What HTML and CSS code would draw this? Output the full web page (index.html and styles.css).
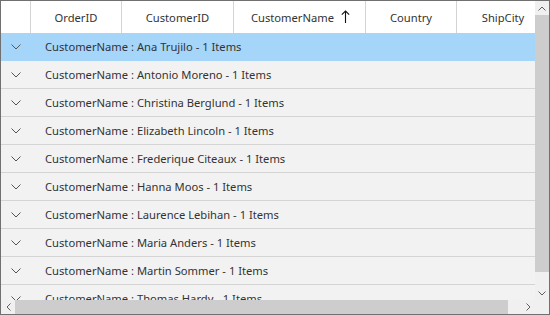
FILE: index.html
```html
<!DOCTYPE html>
<html>
<head>
<meta charset="utf-8">
<link rel="stylesheet" href="styles.css">
</head>
<body>
<div class="grid">
  <div class="viewport">
    <div class="header">
      <div class="hcell indent"></div>
      <div class="hcell c-order">OrderID</div>
      <div class="hcell c-cid">CustomerID</div>
      <div class="hcell c-name">CustomerName <svg class="sort" width="9" height="14" viewBox="0 0 9 14"><path d="M4.5 1 V13 M0.8 4.7 L4.5 1 L8.2 4.7" fill="none" stroke="#111" stroke-width="1.1"/></svg></div>
      <div class="hcell c-country">Country</div>
      <div class="hcell c-city">ShipCity</div>
    </div>
    <div class="rows">
      <div class="row selected"><span class="exp"><svg width="10" height="6" viewBox="0 0 10 6"><path d="M0.5 0.5 L5 5 L9.5 0.5" fill="none" stroke="#555" stroke-width="1"/></svg></span><span class="cap">CustomerName : Ana Trujilo - 1 Items</span></div>
      <div class="row"><span class="exp"><svg width="10" height="6" viewBox="0 0 10 6"><path d="M0.5 0.5 L5 5 L9.5 0.5" fill="none" stroke="#555" stroke-width="1"/></svg></span><span class="cap">CustomerName : Antonio Moreno - 1 Items</span></div>
      <div class="row"><span class="exp"><svg width="10" height="6" viewBox="0 0 10 6"><path d="M0.5 0.5 L5 5 L9.5 0.5" fill="none" stroke="#555" stroke-width="1"/></svg></span><span class="cap">CustomerName : Christina Berglund - 1 Items</span></div>
      <div class="row"><span class="exp"><svg width="10" height="6" viewBox="0 0 10 6"><path d="M0.5 0.5 L5 5 L9.5 0.5" fill="none" stroke="#555" stroke-width="1"/></svg></span><span class="cap">CustomerName : Elizabeth Lincoln - 1 Items</span></div>
      <div class="row"><span class="exp"><svg width="10" height="6" viewBox="0 0 10 6"><path d="M0.5 0.5 L5 5 L9.5 0.5" fill="none" stroke="#555" stroke-width="1"/></svg></span><span class="cap">CustomerName : Frederique Citeaux - 1 Items</span></div>
      <div class="row"><span class="exp"><svg width="10" height="6" viewBox="0 0 10 6"><path d="M0.5 0.5 L5 5 L9.5 0.5" fill="none" stroke="#555" stroke-width="1"/></svg></span><span class="cap">CustomerName : Hanna Moos - 1 Items</span></div>
      <div class="row"><span class="exp"><svg width="10" height="6" viewBox="0 0 10 6"><path d="M0.5 0.5 L5 5 L9.5 0.5" fill="none" stroke="#555" stroke-width="1"/></svg></span><span class="cap">CustomerName : Laurence Lebihan - 1 Items</span></div>
      <div class="row"><span class="exp"><svg width="10" height="6" viewBox="0 0 10 6"><path d="M0.5 0.5 L5 5 L9.5 0.5" fill="none" stroke="#555" stroke-width="1"/></svg></span><span class="cap">CustomerName : Maria Anders - 1 Items</span></div>
      <div class="row"><span class="exp"><svg width="10" height="6" viewBox="0 0 10 6"><path d="M0.5 0.5 L5 5 L9.5 0.5" fill="none" stroke="#555" stroke-width="1"/></svg></span><span class="cap">CustomerName : Martin Sommer - 1 Items</span></div>
      <div class="row"><span class="exp"><svg width="10" height="6" viewBox="0 0 10 6"><path d="M0.5 0.5 L5 5 L9.5 0.5" fill="none" stroke="#555" stroke-width="1"/></svg></span><span class="cap">CustomerName : Thomas Hardy - 1 Items</span></div>
    </div>
  </div>
  <div class="vscroll">
    <div class="sbtn"><svg width="8" height="5" viewBox="0 0 8 5"><path d="M0.5 4.5 L4 1 L7.5 4.5" fill="none" stroke="#606060" stroke-width="1"/></svg></div>
    <div class="vthumb"></div>
    <div class="vtrack"></div>
    <div class="sbtn"><svg width="8" height="5" viewBox="0 0 8 5"><path d="M0.5 0.5 L4 4 L7.5 0.5" fill="none" stroke="#606060" stroke-width="1"/></svg></div>
  </div>
  <div class="hscroll">
    <div class="sbtn"><svg width="5" height="8" viewBox="0 0 5 8"><path d="M4.5 0.5 L1 4 L4.5 7.5" fill="none" stroke="#606060" stroke-width="1"/></svg></div>
    <div class="hthumb"></div>
    <div class="htrack"></div>
    <div class="sbtn"><svg width="5" height="8" viewBox="0 0 5 8"><path d="M0.5 0.5 L4 4 L0.5 7.5" fill="none" stroke="#606060" stroke-width="1"/></svg></div>
  </div>
  <div class="corner"></div>
</div>
</body>
</html>
```

FILE: styles.css
```css
* { box-sizing: border-box; }
html, body { margin: 0; padding: 0; background: #fff; }
body { font-family: "Noto Sans", "Open Sans", sans-serif; font-size: 11.2px; color: #333; }

.grid {
  width: 550px;
  height: 315px;
  border: 1px solid #707070;
  display: grid;
  grid-template-columns: 534px 14px;
  grid-template-rows: 299px 14px;
  background: #f0f0f0;
}

.viewport {
  overflow: hidden;
  background: #f2f2f2;
  display: flex;
  flex-direction: column;
}

.header {
  display: flex;
  height: 32px;
  flex: none;
  background: #fff;
}
.hcell {
  flex: none;
  display: flex;
  align-items: center;
  justify-content: center;
  border-right: 1px solid #d4d4d4;
  color: #333;
  white-space: nowrap;
}
.indent { width: 30px; }
.c-order { width: 91px; }
.c-cid { width: 112px; }
.c-name { width: 132px; padding-left: 2px; }
.c-country { width: 91px; }
.c-city { width: 92px; border-right: none; }
.sort { margin-left: 7px; }

.rows { display: flex; flex-direction: column; }
.row {
  flex: none;
  height: 28px;
  display: flex;
  align-items: center;
  border-bottom: 1px solid #d4d4d4;
  white-space: nowrap;
}
.row.selected { background: #a6d5fa; border-bottom-color: #a6d5fa; }
.exp { width: 44px; padding-left: 10px; display: flex; align-items: center; }
.cap { color: #333; }

.vscroll {
  display: flex;
  flex-direction: column;
  background: #f0f0f0;
}
.vscroll .sbtn { height: 14px; flex: none; }
.vthumb { height: 257px; background: #cdcdcd; flex: none; }
.vtrack { flex: 1; }

.hscroll {
  display: flex;
  background: #f0f0f0;
}
.hscroll .sbtn { width: 14px; flex: none; }
.hthumb { width: 493px; background: #cdcdcd; flex: none; }
.htrack { flex: 1; }

.sbtn { display: flex; align-items: center; justify-content: center; }
.corner { background: #f0f0f0; }
```
